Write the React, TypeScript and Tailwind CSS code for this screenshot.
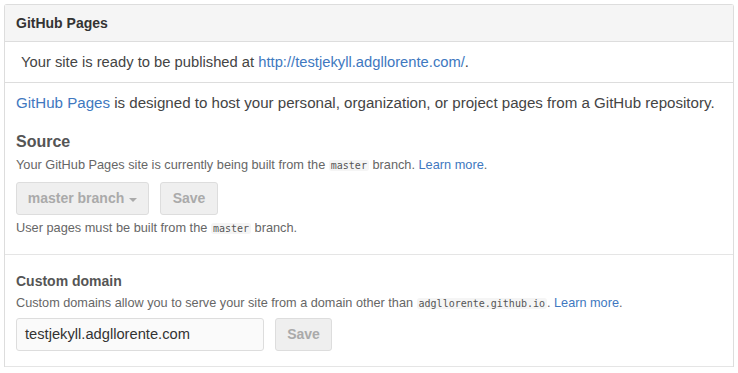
export default function App() {
  const font = { fontFamily: '"Liberation Sans", Arial, sans-serif' };
  return (
    <div className="min-h-[373px] bg-white pl-[4px] pt-[4px] text-[#333]" style={font}>
      <div className="w-[730px] rounded-t-[3px] border border-[#ddd] border-b-0">
        <div className="flex h-[37px] items-center border-b border-[#ddd] bg-[#f5f5f5] px-[11px] text-[14px] font-bold text-[#333]">
          GitHub Pages
        </div>
        <div className="flex h-[41px] items-center border-b border-[#ddd] px-[16px] text-[14.75px] text-[#444]">
          Your site is ready to be published at&nbsp;
          <a className="text-[#4078c0]">http://testjekyll.adgllorente.com/</a>.
        </div>
        <div className="border-b border-[#e5e5e5] px-[11px] pb-[16px]">
          <p className="pt-[10px] text-[15.1px] leading-[20px] text-[#444]">
            <a className="text-[#4078c0]">GitHub Pages</a> is designed to host your personal, organization, or project
            pages from a GitHub repository.
          </p>
          <h3 className="mt-[19px] text-[16px] font-semibold leading-[20px] text-[#555]">Source</h3>
          <p className="mt-[4px] text-[12.75px] leading-[18px] text-[#666]">
            Your GitHub Pages site is currently being built from the <Code>master</Code> branch.{" "}
            <a className="text-[#4078c0]">Learn more</a>.
          </p>
          <div className="mt-[7px] flex gap-[11px]">
            <button className="flex h-[33px] w-[133px] items-center justify-center gap-[5px] rounded-[3px] border border-[#ddd] bg-[#efefef] text-[14px] font-bold text-[#aaa]">
              master branch
              <span className="mt-[2px] h-0 w-0 border-x-[4px] border-t-[4px] border-x-transparent border-t-[#aaa]" />
            </button>
            <button className="h-[33px] w-[58px] rounded-[3px] border border-[#ddd] bg-[#efefef] text-[14px] font-bold text-[#aaa]">
              Save
            </button>
          </div>
          <p className="mt-[4px] text-[12.75px] leading-[18px] text-[#666]">
            User pages must be built from the <Code>master</Code> branch.
          </p>
        </div>
        <div className="border-b border-[#e5e5e5] px-[11px] pb-[15px] pt-[16px]">
          <h3 className="text-[14px] font-semibold leading-[20px] text-[#555]">Custom domain</h3>
          <p className="mt-[3px] text-[12.7px] leading-[18px] text-[#666]">
            Custom domains allow you to serve your site from a domain other than <Code>adgllorente.github.io</Code>.{" "}
            <a className="text-[#4078c0]">Learn more</a>.
          </p>
          <div className="mt-[5px] flex gap-[11px]">
            <div className="flex h-[33px] w-[248px] items-center rounded-[3px] border border-[#ddd] bg-[#fafafa] px-[8px] text-[14.7px] text-[#333]">
              testjekyll.adgllorente.com
            </div>
            <button className="h-[33px] w-[57px] rounded-[3px] border border-[#ddd] bg-[#efefef] text-[14px] font-bold text-[#aaa]">
              Save
            </button>
          </div>
        </div>
      </div>
    </div>
  );
}

function Code({ children }: { children: React.ReactNode }) {
  return (
    <code
      className="rounded-[3px] bg-[#f5f5f5] px-[2px] text-[10px] text-[#555]"
      style={{ fontFamily: '"DejaVu Sans Mono", "Liberation Mono", monospace' }}
    >
      {children}
    </code>
  );
}
